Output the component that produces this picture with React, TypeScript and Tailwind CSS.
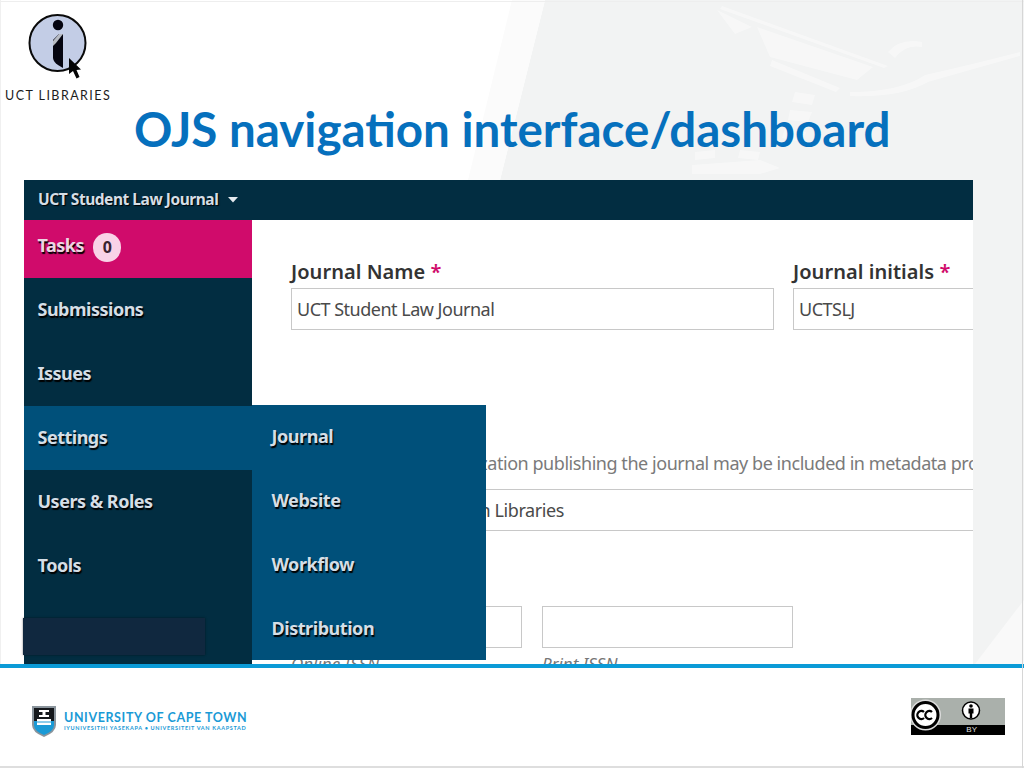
export default function App() {
  const side = "h-16 shrink-0 flex items-center pl-[13.500px] pb-[1px] text-[18px] font-bold tracking-[-0.5px] text-[#d5dee6] [text-shadow:1px_1.500px_1px_#000]";
  const sub = "h-[63.750px] shrink-0 flex items-center pl-[19.500px] text-[18px] font-bold tracking-[-0.45px] text-[#d5dee6] [text-shadow:1px_1.500px_1px_#000]";
  const label = "text-[20px] leading-[27px] font-semibold tracking-[0.05px] text-[#333333]";
  const input = "h-[42px] shrink-0 border border-[#c8c8c8] bg-white flex items-center px-[5px] text-[18px] tracking-[-0.5px] text-[#4a4a4a] whitespace-nowrap overflow-hidden";
  return (
    <div className="relative w-[1024px] h-[768px] overflow-hidden bg-white flex flex-col font-['Noto_Sans','Open_Sans',sans-serif]">
      <svg className="absolute left-0 top-0 w-[1024px] h-[664px]" viewBox="0 0 1024 664" aria-hidden="true">
        <rect width="1024" height="664" fill="#ffffff" />
        <path d="M545 0 L1024 0 L1024 664 L973 664 L973 180 L500 180 Z" fill="#f2f3f3" />
        <path d="M512 0 L545 0 L500 180 L468 180 Z" fill="#fbfbfb" />
        <path d="M1024 600 L1024 664 L975 664 Z" fill="#f9f9f9" />
        <g fill="#ffffff" opacity="0.4">
          <path d="M717 10 L752 27 L735 34 Z" />
          <path d="M722 6 L888 66 L884 68 L720 9 Z" />
          <path d="M757 27 L873 67 L857 80 L770 57 Z" />
          <path d="M772 60 L840 88 L836 92 L770 66 Z" />
          <path d="M795 92 L815 95 L812 105 L792 102 Z M790 110 L812 112 L808 122 L788 120 Z M785 128 L806 132 L802 142 L782 138 Z" />
          <path d="M692 165 L760 160 L780 168 L760 174 L692 174 Z" />
          <path d="M695 152 L715 150 L715 158 L695 160 Z M740 150 L760 152 L758 160 L738 158 Z" />
          <path d="M850 92 Q900 92 925 75 Q970 65 1020 52 L1020 56 Q970 70 928 82 Q900 98 850 96 Z" />
          <path d="M888 52 Q900 38 922 42 L922 47 Q905 44 895 58 Z" />
        </g>
      </svg>
      <div className="absolute left-0 top-[1px] w-full h-[1px] bg-[#eeeeee]" />
      <div className="absolute left-0 top-0 bottom-0 w-[1px] bg-[#f0f0f0]" />

      <div className="relative h-[180px] shrink-0">
        <div className="absolute left-[28px] top-[14px]">
          <svg width="66" height="66" viewBox="0 0 66 66">
            <circle cx="29.500" cy="29" r="28" fill="#c3cde6" stroke="#0a0a0a" strokeWidth="2" />
            <circle cx="30" cy="11" r="5.200" fill="#050510" />
            <path d="M25 26 L31 20 L35 20 L35 54 L30 51 Q25.500 48 25 44 Z" fill="#050510" />
            <path d="M25 27 L31 20 L35 20 L28 29 L25 32 Z" fill="#b8bcc4" />
            <path d="M41 44 L41 60 L45 57 L48.500 64.500 L51.500 63 L48.500 56 L53 55.500 Z" fill="#050505" />
          </svg>
        </div>
        <div className="absolute left-[5px] top-[88px] text-[12.500px] leading-[16px] tracking-[1.45px] text-[#1c1c1c] font-['Lato',sans-serif] whitespace-nowrap">UCT LIBRARIES</div>
        <h1 className="absolute left-[134px] top-[99px] text-[47.500px] leading-[60px] font-bold text-[#0670bd] font-['Lato',sans-serif] whitespace-nowrap">OJS navigation interface/dashboard</h1>
      </div>

      <div className="relative ml-[24px] w-[949px] h-[484px] shrink-0 overflow-hidden bg-white flex flex-col">
        <div className="h-10 shrink-0 bg-[#022d41] flex items-center pl-[14px] gap-[10px]">
          <span className="text-[15.500px] font-bold tracking-[-0.46px] text-[#d5dee6] [text-shadow:1px_1px_1px_#000]">UCT Student Law Journal</span>
          <svg width="10" height="6" viewBox="0 0 10 6"><path d="M0 0 H10 L5 5.500 Z" fill="#e4e9ee" /></svg>
        </div>
        <div className="flex flex-1 min-h-0">
          <div className="w-[228px] shrink-0 bg-[#022d41] flex flex-col">
            <div className="h-[58px] shrink-0 bg-[#d00b6b] flex items-center pl-[13.500px] pb-[4px] gap-[9px] text-[18px] font-bold tracking-[-0.5px] text-[#ecd5e2] [text-shadow:1px_1.500px_1px_#000]">
              <span className="mb-[4px]">Tasks</span>
              <span className="w-[28px] h-[29px] rounded-full bg-[#f9d3e7] flex items-center justify-center text-[16px] text-[#3a2430] [text-shadow:none]">0</span>
            </div>
            <div className={side}>Submissions</div>
            <div className={side}>Issues</div>
            <div className={side + " bg-[#00507a]"}>Settings</div>
            <div className={side}>Users &amp; Roles</div>
            <div className={side}>Tools</div>
          </div>
          <div className="flex-1 min-w-0 pl-[39px] pt-[38px] flex flex-col">
            <div className="flex gap-[19px] shrink-0">
              <div className="w-[483px] shrink-0">
                <div className={label}>Journal Name <span className="text-[#d00b6b]">*</span></div>
                <div className={input + " mt-[3px]"}>UCT Student Law Journal</div>
              </div>
              <div className="w-[300px] shrink-0">
                <div className={label}>Journal initials <span className="text-[#d00b6b]">*</span></div>
                <div className={input + " mt-[3px]"}>UCTSLJ</div>
              </div>
            </div>
            <div className="mt-[119px] shrink-0 text-[18px] leading-[28px] tracking-[-0.45px] text-[#7a7a7a] whitespace-nowrap">The name of the organization publishing the journal may be included in metadata provided</div>
            <div className={input + " mt-[12px] w-[700px] tracking-[-0.42px]"}>University of Cape Town Libraries</div>
            <div className="flex gap-[20px] mt-[75px] shrink-0">
              <div className="w-[231px] h-[42px] border border-[#c8c8c8] bg-white" />
              <div className="w-[251px] h-[42px] border border-[#c8c8c8] bg-white" />
            </div>
            <div className="flex gap-[20px] mt-[6px] shrink-0 text-[17px] leading-[20px] italic text-[#767676]">
              <div className="w-[231px]">Online ISSN</div>
              <div className="w-[251px]">Print ISSN</div>
            </div>
          </div>
        </div>
        <div className="absolute left-[228px] top-[225px] w-[234px] h-[255px] bg-[#00507a] flex flex-col">
          <div className={sub}>Journal</div>
          <div className={sub}>Website</div>
          <div className={sub}>Workflow</div>
          <div className={sub}>Distribution</div>
        </div>
      </div>
      <div className="absolute left-[23px] top-[618px] w-[182px] h-[37px] bg-[#10283f] shadow-[0_0_2px_rgba(0,0,0,0.5)]" />

      <div className="relative h-1 shrink-0 bg-[#0b9bd7]" />

      <div className="relative flex-1 bg-white flex items-start justify-between pl-[31px] pr-[19px] border-b-[2px] border-[#dedede]">
        <div className="flex items-center gap-[7px] mt-[37px]">
          <svg width="26" height="32" viewBox="0 0 26 32">
            <path d="M1 1 H25 V20 Q25 27 13 32 Q1 27 1 20 Z" fill="#8a949c" />
            <path d="M3 3 H23 V16 H3 Z" fill="#15181c" />
            <path d="M3 16 H23 V20 Q23 26 13 30 Q3 26 3 20 Z" fill="#1a9ad6" />
            <path d="M8 5 H18 V7 H14.500 V10 H18 V12 H8 V10 H11.500 V7 H8 Z" fill="#ffffff" />
            <path d="M6 14 H20 V20 H6 Z" fill="#ffffff" />
            <path d="M6 17 H20" stroke="#1a9ad6" strokeWidth="1" />
          </svg>
          <div className="flex flex-col text-[#1a9ad6] whitespace-nowrap font-['Lato',sans-serif]">
            <span className="text-[12.500px] leading-[13px] font-bold tracking-[0.6px]">UNIVERSITY OF CAPE TOWN</span>
            <span className="text-[5.500px] leading-[8px] font-bold tracking-[0.67px]">IYUNIVESITHI YASEKAPA • UNIVERSITEIT VAN KAAPSTAD</span>
          </div>
        </div>
        <div className="mt-[30px] w-[94px] h-[37px] bg-[#aab0ab] relative overflow-hidden flex">
          <div className="absolute left-0 right-0 bottom-0 h-[10px] bg-black flex justify-end pr-[28px] items-center text-[8px] leading-[10px] text-[#e0e0e0] font-['Liberation_Sans',sans-serif]">BY</div>
          <svg className="relative" width="94" height="37" viewBox="0 0 94 37">
            <circle cx="14.500" cy="17" r="15.500" fill="#dcdcdc" />
            <circle cx="14.500" cy="17" r="12.500" fill="#ffffff" stroke="#000000" strokeWidth="3" />
            <path d="M13 14 A4 4 0 1 0 13 20" fill="none" stroke="#000000" strokeWidth="2.300" />
            <path d="M21 14 A4 4 0 1 0 21 20" fill="none" stroke="#000000" strokeWidth="2.300" />
            <circle cx="60" cy="12.500" r="8.500" fill="#ffffff" stroke="#000000" strokeWidth="1.500" />
            <circle cx="60" cy="8" r="1.800" fill="#000000" />
            <path d="M57.500 10.500 H62.500 V15.500 H61.200 V20 H58.800 V15.500 H57.500 Z" fill="#000000" />
          </svg>
        </div>
      </div>
      <div className="absolute right-[1px] top-0 bottom-0 w-[1.500px] bg-[#d6d6d6]" />
    </div>
  );
}
